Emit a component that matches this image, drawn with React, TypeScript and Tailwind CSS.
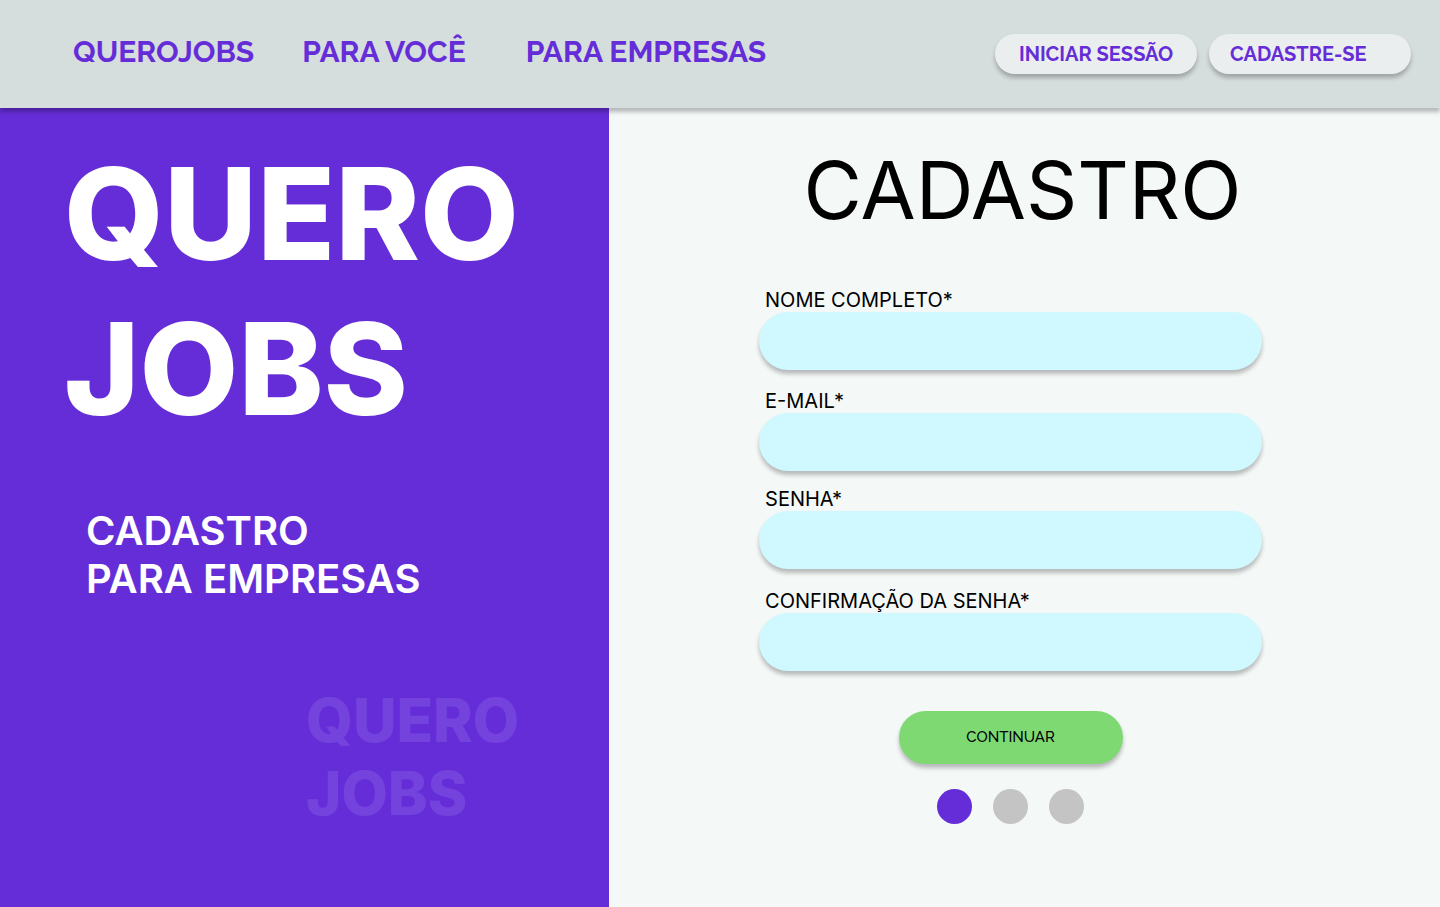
import React from "react";

const fields = [
  { id: "nome", label: "NOME COMPLETO*", type: "text", gap: "mt-[50px]" },
  { id: "email", label: "E-MAIL*", type: "email", gap: "mt-[19px]" },
  { id: "senha", label: "SENHA*", type: "password", gap: "mt-4" },
  { id: "confirmacao", label: "CONFIRMAÇÃO DA SENHA*", type: "password", gap: "mt-5" },
];

export default function App() {
  return (
    <div className="flex min-h-screen flex-col bg-[#f4f8f7] font-['Inter',sans-serif]">
      <header className="z-10 flex h-27 items-center justify-between bg-[#d6dedd] pr-[29px] pl-[73px] font-['Raleway','Lato',sans-serif] font-bold text-[#652dd8] shadow-[0_4px_4px_rgba(0,0,0,0.25)]">
        <nav className="flex items-center pb-1 text-[30px] leading-9">
          <a href="#inicio">QUEROJOBS</a>
          <a href="#voce" className="ml-12">PARA VOCÊ</a>
          <a href="#empresas" className="ml-15">PARA EMPRESAS</a>
        </nav>
        <div className="flex gap-3 text-xl leading-6">
          <button type="button" className="h-10 w-[202px] rounded-full bg-[#ebeeee] shadow-[0_4px_4px_rgba(0,0,0,0.25)]">INICIAR SESSÃO</button>
          <button type="button" className="h-10 w-[202px] rounded-full bg-[#ebeeee] pl-[21px] text-left shadow-[0_4px_4px_rgba(0,0,0,0.25)]">CADASTRE-SE</button>
        </div>
      </header>
      <main className="flex grow">
        <section className="flex w-[42.3%] flex-col bg-[#652dd8] pt-7 text-white">
          <h1 className="pl-16 text-[128px] leading-[155px] font-extrabold">QUERO<br />JOBS</h1>
          <h2 className="mt-[61px] pl-[86px] text-[40px] leading-12 font-semibold">CADASTRO<br />PARA EMPRESAS</h2>
          <p aria-hidden="true" className="mt-[81px] pl-[306px] text-[60px] leading-[73px] font-extrabold text-white/10">QUERO<br />JOBS</p>
        </section>
        <section className="flex grow flex-col items-center pt-[33px]">
          <h2 className="mr-1 text-[80px] leading-[97px]">CADASTRO</h2>
          <div className="mr-7 flex flex-col items-center">
            <form className="flex w-[503px] flex-col">
              {fields.map((f) => (
                <div key={f.id} className={"flex flex-col " + f.gap}>
                  <label htmlFor={f.id} className="pl-1.5 text-xl leading-6">{f.label}</label>
                  <input id={f.id} type={f.type} className="h-[58px] rounded-full bg-[#cff8ff] px-6 shadow-[0_4px_4px_rgba(0,0,0,0.25)]" />
                </div>
              ))}
              <button type="button" className="mt-10 h-[53px] w-56 self-center rounded-full bg-[#7fd973] font-['Raleway','Lato',sans-serif] text-[15px] font-medium shadow-[0_4px_4px_rgba(0,0,0,0.25)]">CONTINUAR</button>
            </form>
            <div className="mt-[25px] flex gap-[21px]">
              <span className="size-[35px] rounded-full bg-[#652dd8]" />
              <span className="size-[35px] rounded-full bg-[#c4c4c4]" />
              <span className="size-[35px] rounded-full bg-[#c4c4c4]" />
            </div>
          </div>
        </section>
      </main>
    </div>
  );
}
